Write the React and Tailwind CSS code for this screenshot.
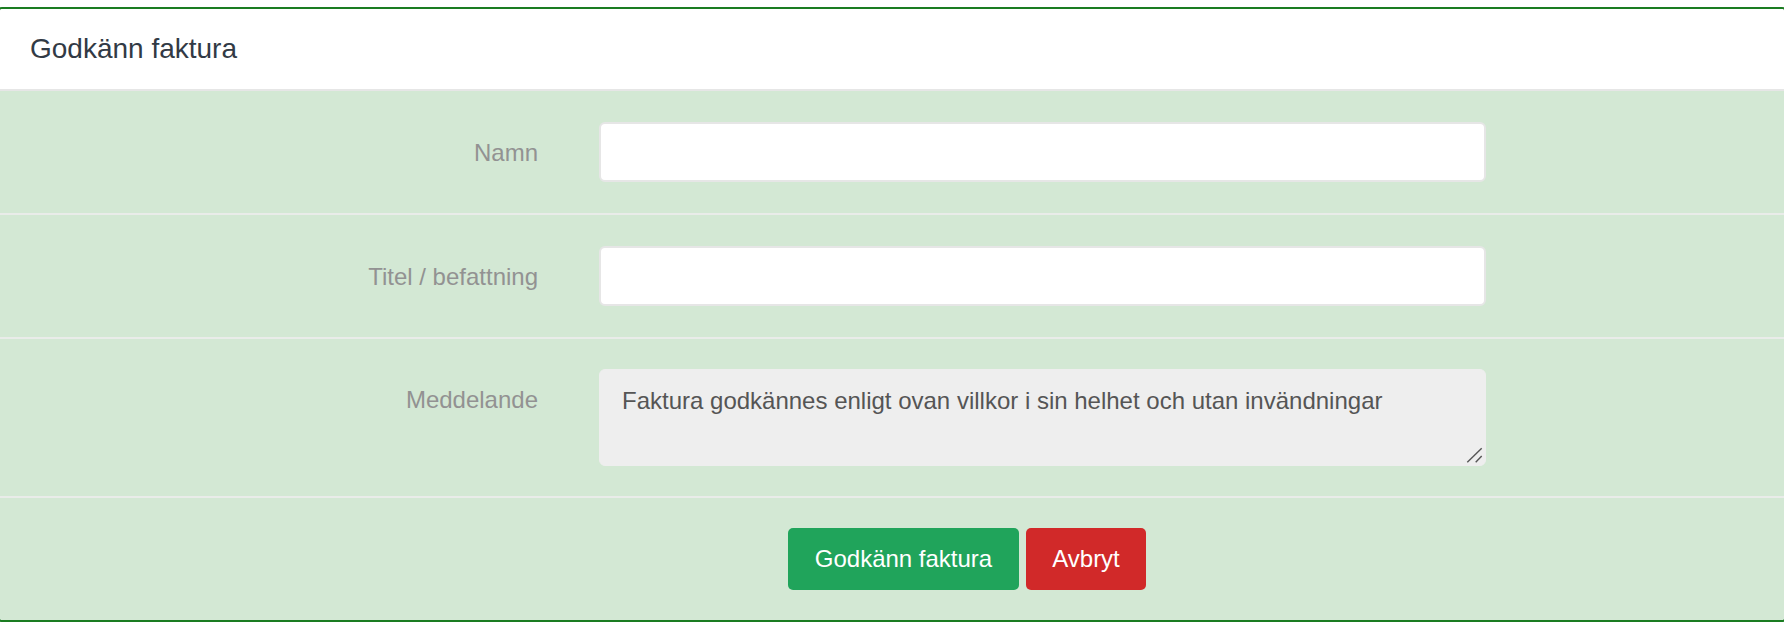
import React from "react";

const font = { fontFamily: '"Liberation Sans", Arial, Helvetica, sans-serif' };

function Row({ label, children }) {
  return (
    <div className="flex border-b-2 border-[#e9ece9] py-[31px]">
      <div className="w-[538px] shrink-0 pt-[14px] text-right text-[24px] leading-[34px] text-[#929292]">
        {label}
      </div>
      <div className="ml-[61px] w-[887px] shrink-0">{children}</div>
    </div>
  );
}

export default function App() {
  return (
    <div className="w-[1784px] h-[624px] overflow-hidden bg-white pt-[7px]" style={font}>
      <div className="-mx-[2px] rounded-[4px] border-2 border-[#1a7c21] overflow-hidden">
        <div className="flex h-[82px] items-center border-b-2 border-[#e6e6e6] bg-white pl-[30px] text-[28px] text-[#323a45]">
          Godkänn faktura
        </div>
        <div className="bg-[#d3e8d4]">
          <Row label="Namn">
            <input
              type="text"
              className="block h-[60px] w-full rounded-[6px] border-2 border-[#e6e6e6] bg-white px-[22px] text-[24px] text-[#555] outline-none"
            />
          </Row>
          <Row label="Titel / befattning">
            <input
              type="text"
              className="block h-[60px] w-full rounded-[6px] border-2 border-[#e6e6e6] bg-white px-[22px] text-[24px] text-[#555] outline-none"
            />
          </Row>
          <div className="flex border-b-2 border-[#e9ece9] py-[30px]">
            <div className="w-[538px] shrink-0 pt-[14px] text-right text-[24px] leading-[34px] text-[#929292]">
              Meddelande
            </div>
            <div className="relative ml-[61px] w-[887px] shrink-0">
              <textarea
                readOnly
                defaultValue="Faktura godkännes enligt ovan villkor i sin helhet och utan invändningar"
                className="block h-[97px] w-full resize-none rounded-[6px] border border-[#eeeeee] bg-[#eeeeee] pl-[22px] pr-[22px] pt-[14px] text-[24px] leading-[34px] text-[#555555] outline-none"
                style={font}
              />
              <svg
                className="pointer-events-none absolute bottom-[2px] right-[2px]"
                width="20"
                height="20"
                viewBox="0 0 20 20"
              >
                <line x1="17.7" y1="4.3" x2="3.3" y2="18.3" stroke="#555" strokeWidth="1.4" />
                <line x1="17.7" y1="12" x2="11.7" y2="18.3" stroke="#555" strokeWidth="1.4" />
              </svg>
            </div>
          </div>
          <div className="flex gap-[7px] pl-[788px] pt-[30px] pb-[30px]">
            <button className="flex h-[62px] w-[231px] items-center justify-center rounded-[5px] bg-[#20a45b] text-[24px] text-white">
              Godkänn faktura
            </button>
            <button className="flex h-[62px] w-[120px] items-center justify-center rounded-[5px] bg-[#d12929] text-[24px] text-white">
              Avbryt
            </button>
          </div>
        </div>
      </div>
    </div>
  );
}
